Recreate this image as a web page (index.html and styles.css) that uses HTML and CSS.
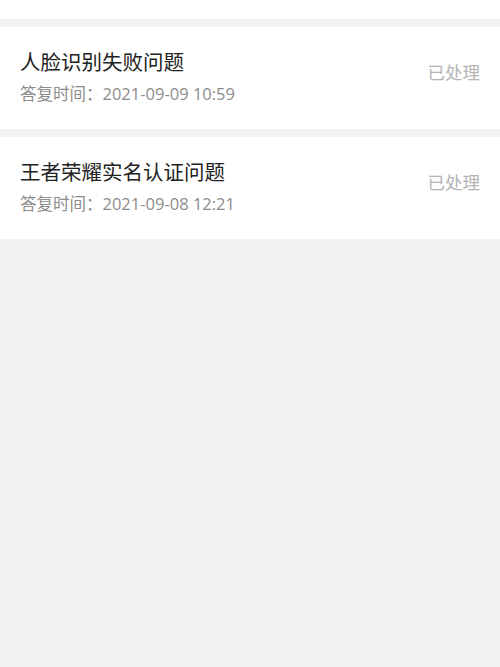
FILE: index.html
```html
<!DOCTYPE html>
<html lang="zh-CN">
<head>
<meta charset="utf-8">
<title>反馈记录</title>
<link rel="stylesheet" href="styles.css">
</head>
<body>
<div class="page">
  <div class="prev-card"></div>
  <ul class="list">
    <li class="item">
      <div class="info">
        <div class="title">人脸识别失败问题</div>
        <div class="meta">答复时间：2021-09-09 10:59</div>
      </div>
      <div class="status">已处理</div>
    </li>
    <li class="item">
      <div class="info">
        <div class="title">王者荣耀实名认证问题</div>
        <div class="meta">答复时间：2021-09-08 12:21</div>
      </div>
      <div class="status">已处理</div>
    </li>
  </ul>
</div>
</body>
</html>
```
FILE: styles.css
```css
html, body {
  margin: 0;
  padding: 0;
  background: #f2f2f2;
  font-family: "Noto Sans CJK SC", sans-serif;
}
.page {
  min-height: 667px;
  background: #f2f2f2;
}
.prev-card {
  height: 19px;
  background: #fff;
}
.list {
  list-style: none;
  margin: 0;
  padding: 8px 0 0;
  display: flex;
  flex-direction: column;
  gap: 8px;
}
.item {
  background: #fff;
  display: flex;
  align-items: center;
  justify-content: space-between;
  padding: 20px 20px 24px 20px;
  height: 58px;
}
.info {
  display: flex;
  flex-direction: column;
  gap: 8px;
}
.title {
  font-size: 20.5px;
  line-height: 28px;
  color: #222;
}
.meta {
  font-family: "Open Sans", "Noto Sans CJK SC", sans-serif;
  font-size: 16.5px;
  line-height: 22px;
  color: #8c8c8c;
}
.status {
  font-size: 17.5px;
  line-height: 24px;
  color: #b4b4b4;
  margin-bottom: 9px;
}
```
